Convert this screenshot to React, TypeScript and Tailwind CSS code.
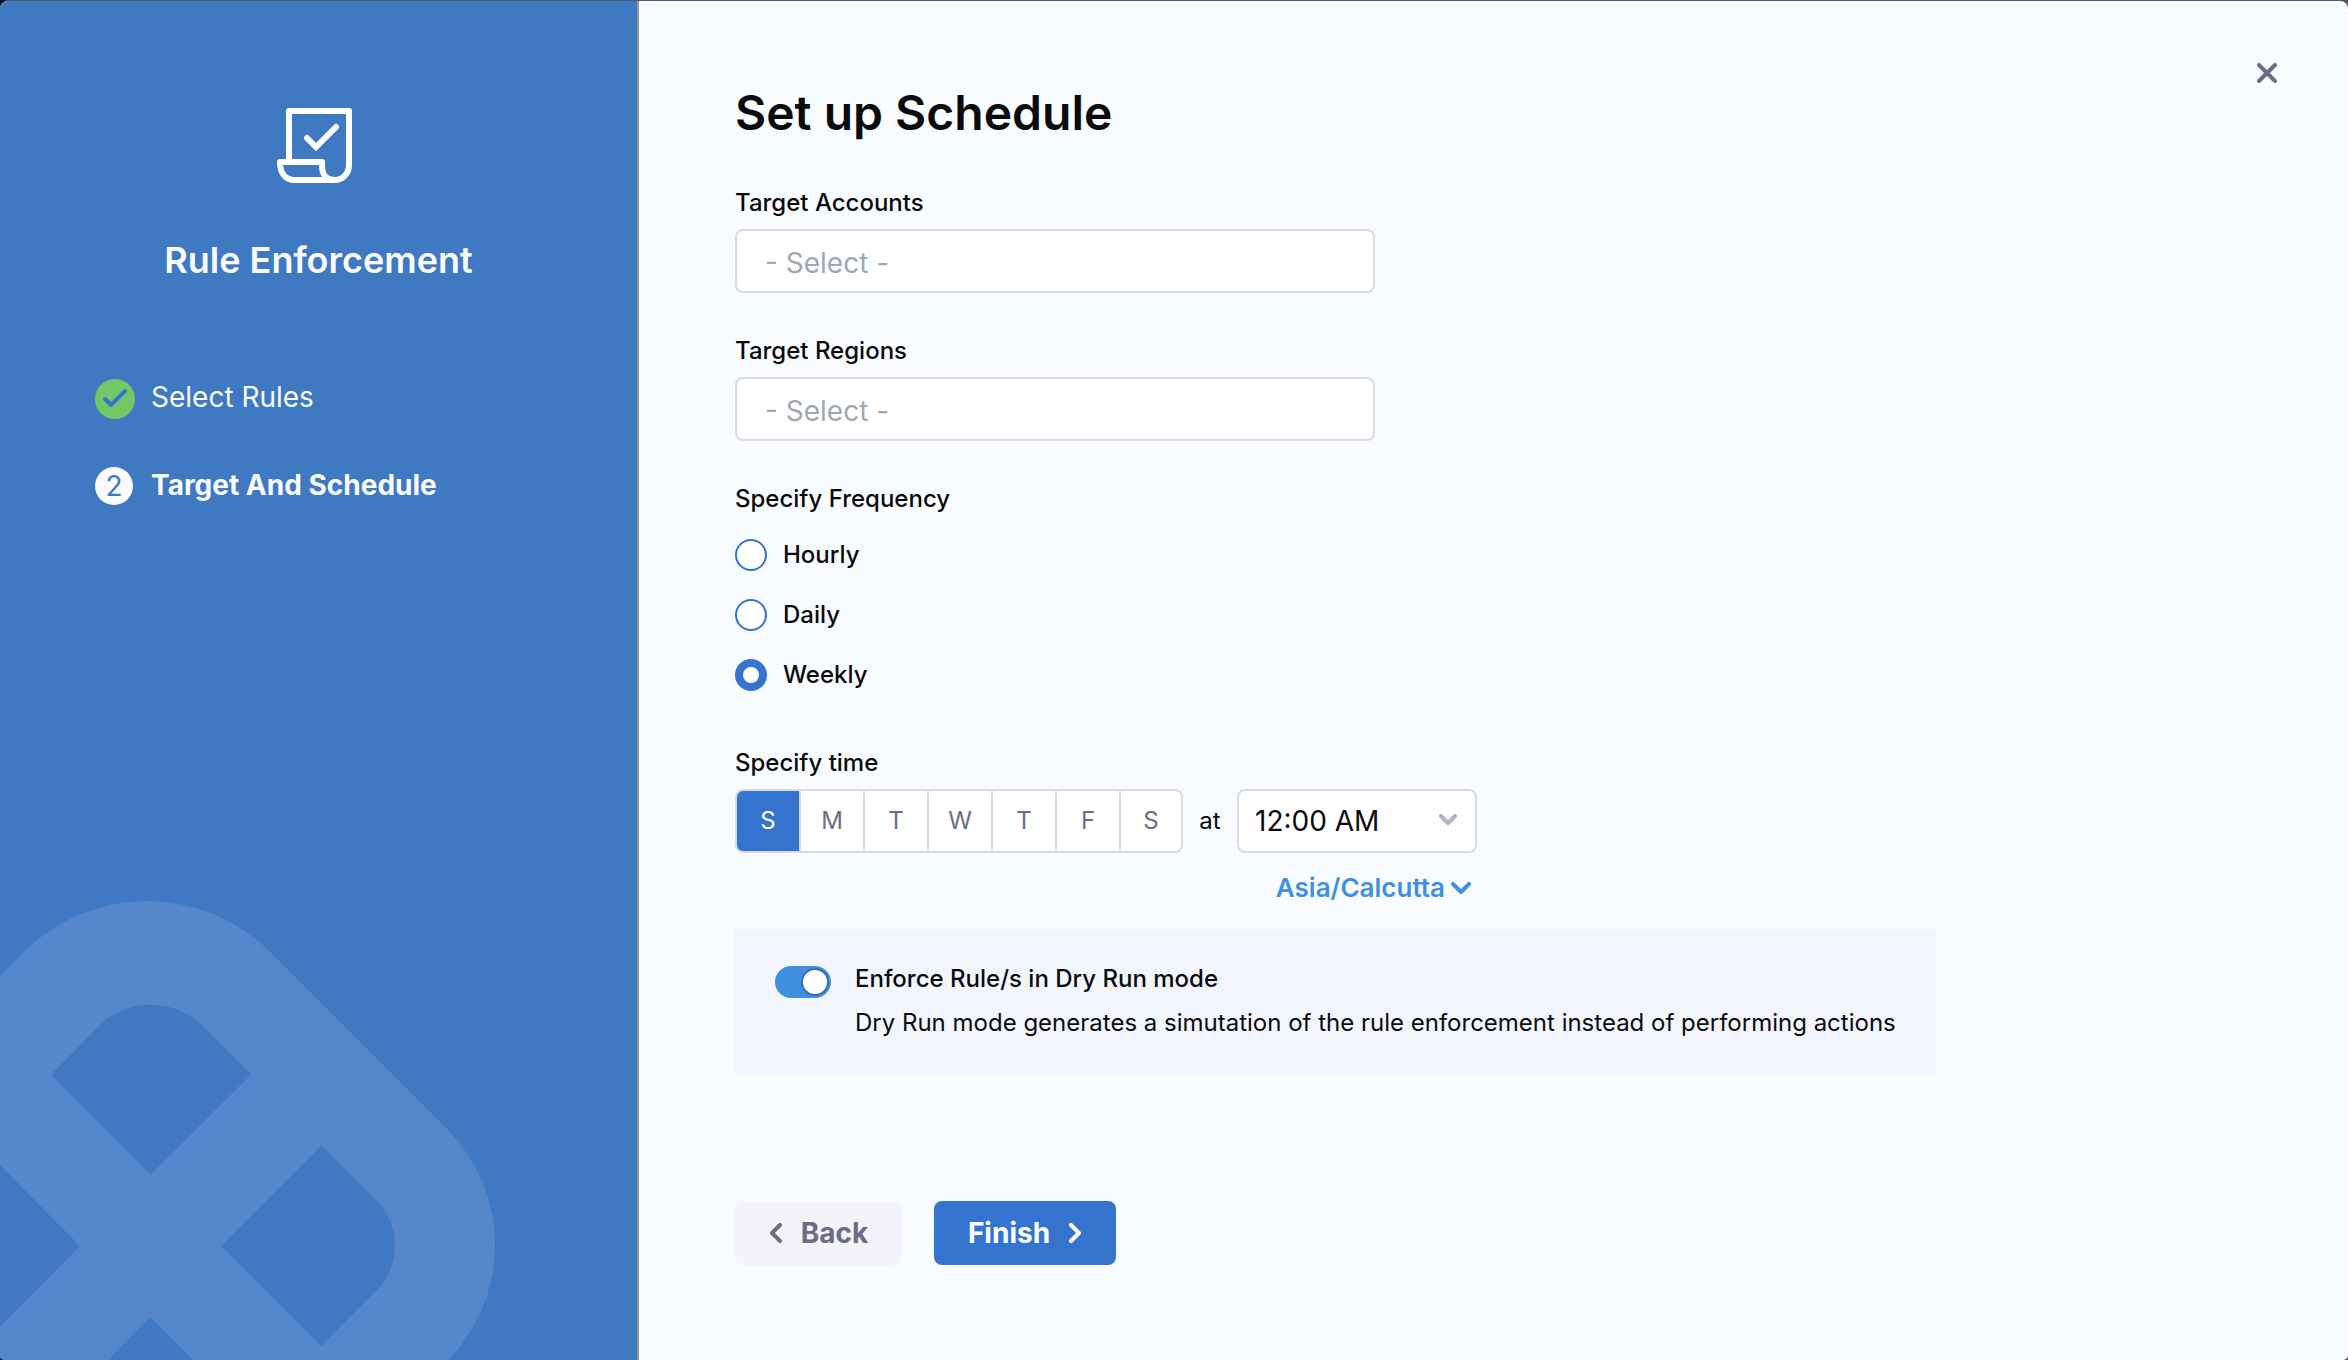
import { useState } from "react";

const DAYS = [
  { letter: "S", name: "Sunday" },
  { letter: "M", name: "Monday" },
  { letter: "T", name: "Tuesday" },
  { letter: "W", name: "Wednesday" },
  { letter: "T", name: "Thursday" },
  { letter: "F", name: "Friday" },
  { letter: "S", name: "Saturday" },
];

const FREQUENCIES = ["Hourly", "Daily", "Weekly"];

function RuleIcon() {
  return (
    <svg width="75" height="75" viewBox="0 0 75 75" fill="none" stroke="white" strokeWidth="6" strokeLinejoin="round" strokeLinecap="round" aria-hidden="true">
      <path d="M12 53V3H72V57C72 65 66 72 58 72H18C9 72 3 66 3 54H45V58C45 66 49 72 58 72" />
      <path d="M30 30L39 39L59 19" strokeLinejoin="miter" />
    </svg>
  );
}

function Watermark() {
  return (
    <svg width="500" height="460" viewBox="0 900 500 460" className="absolute bottom-0 left-0" aria-hidden="true">
      <path
        fill="#5488ca"
        fillRule="evenodd"
        d="M-10 986L25 951A174 174 0 0 1 271 953L447 1129A164 164 0 0 1 447 1361H-10ZM51 1074.500L150.500 1174.500L251 1074.500L200 1023.500A74 74 0 0 0 96 1029ZM321.500 1145.500L221.500 1246L321.500 1346L376 1291A64 64 0 0 0 376 1200ZM80 1246L-10 1155V1337ZM150.500 1317L107 1361H194Z"
      />
    </svg>
  );
}

function Chevron({ className, path, width, height }: { className?: string; path: string; width: number; height: number }) {
  return (
    <svg width={width} height={height} viewBox={`0 0 ${width} ${height}`} className={className} fill="none" stroke="currentColor" strokeWidth="4" strokeLinecap="round" strokeLinejoin="round" aria-hidden="true">
      <path d={path} />
    </svg>
  );
}

function TargetField({ id, label }: { id: string; label: string }) {
  return (
    <div className="flex w-[640px] flex-col gap-[10px]">
      <label htmlFor={id} className="text-2xl leading-8 font-medium">{label}</label>
      <input
        id={id}
        type="text"
        placeholder="- Select -"
        className="h-16 w-full rounded-lg border-2 border-[#d9dae5] bg-white px-7 pt-[3px] text-[28px] placeholder:text-[#9ea8b5]"
      />
    </div>
  );
}

export default function App() {
  const [frequency, setFrequency] = useState("Weekly");
  const [day, setDay] = useState(0);
  const [dryRun, setDryRun] = useState(true);

  return (
    <div className="flex min-h-screen flex-col bg-[linear-gradient(90deg,#14151f_4px,#59595c_8px)] pt-px font-['Inter',sans-serif] text-[#0b0b0d]">
      <div className="flex flex-1 overflow-hidden rounded-t-lg rounded-b-[5px] bg-[#f9fcff]">
        <aside className="relative flex w-[639px] shrink-0 flex-col border-r-2 border-[#96969b] bg-[#3f79c2] pt-[107px] text-[#fafbfc]">
          <Watermark />
          <div className="flex flex-col items-center gap-[53px]">
            <div className="pr-2">
              <RuleIcon />
            </div>
            <h2 className="text-4xl leading-[48px] font-semibold">Rule Enforcement</h2>
          </div>
          <ol className="mt-[95px] flex flex-col gap-12 px-[95px] text-[28px] leading-9">
            <li className="flex gap-4">
              <svg width="40" height="40" viewBox="0 0 40 40" fill="none" aria-hidden="true">
                <circle cx="20" cy="20" r="20" fill="#72c864" />
                <path d="M10 20L16 26L30 12" stroke="#3474d0" strokeWidth="4" strokeLinecap="round" strokeLinejoin="round" />
              </svg>
              <span>Select Rules</span>
            </li>
            <li className="flex gap-[18px] font-bold" aria-current="step">
              <span className="flex size-[38px] items-center justify-center rounded-full bg-[#fafbfc] font-normal text-[#3f79c2]">2</span>
              <span>Target And Schedule</span>
            </li>
          </ol>
        </aside>

        <main className="relative flex-1 px-24 pt-20 pb-[95px]">
          <button type="button" aria-label="Close" className="absolute top-[52px] right-[61px] flex size-10 items-center justify-center text-[#6b6d85]">
            <Chevron path="M2 2L18 18M18 2L2 18" width={20} height={20} />
          </button>

          <h1 className="text-5xl leading-[64px] font-semibold">Set up Schedule</h1>

          <form className="mt-[42px] flex flex-col items-start" onSubmit={(e) => e.preventDefault()}>
            <div className="flex flex-col gap-[42px]">
              <TargetField id="accounts" label="Target Accounts" />
              <TargetField id="regions" label="Target Regions" />
            </div>

            <fieldset className="mt-[42px] text-2xl leading-8 font-medium">
              <legend>Specify Frequency</legend>
              <div className="mt-6 flex flex-col gap-7">
                {FREQUENCIES.map((name) => (
                  <label key={name} className="flex gap-4">
                    <input
                      type="radio"
                      name="frequency"
                      checked={frequency === name}
                      onChange={() => setFrequency(name)}
                      className="size-8 appearance-none rounded-full border-2 border-[#3474cf] bg-white checked:border-8"
                    />
                    {name}
                  </label>
                ))}
              </div>
            </fieldset>

            <div className="mt-14 flex flex-col">
              <h2 className="text-2xl leading-8 font-medium">Specify time</h2>
              <div className="mt-[10px] flex items-center">
                <div role="group" aria-label="Day of the week" className="flex h-16 w-[448px] overflow-hidden rounded-lg border-2 border-[#d9dae5] bg-white">
                  {DAYS.map((d, i) => (
                    <button
                      key={d.name}
                      type="button"
                      aria-label={d.name}
                      aria-pressed={day === i}
                      onClick={() => setDay(i)}
                      className="border-[#d9dae5] text-2xl text-[#6b6d85] not-last:w-16 not-last:border-r-2 last:flex-1 aria-pressed:bg-[#3474cf] aria-pressed:text-white"
                    >
                      {d.letter}
                    </button>
                  ))}
                </div>
                <label htmlFor="time" className="w-[54px] text-center text-2xl">at</label>
                <div className="relative">
                  <select id="time" defaultValue="12:00 AM" className="h-16 w-60 appearance-none rounded-lg border-2 border-[#d9dae5] bg-white px-4 text-[28px]">
                    <option>12:00 AM</option>
                  </select>
                  <Chevron path="M2 2L9 9L16 2" width={18} height={12} className="pointer-events-none absolute top-[25px] right-5 text-[#b0b1c3]" />
                </div>
              </div>
              <button type="button" className="mt-[19px] mr-[6px] flex items-center gap-[6px] self-end text-[26px] leading-8 font-semibold text-[#3f90df]">
                Asia/Calcutta
                <Chevron path="M2 2L10 10L18 2" width={20} height={12} />
              </button>
            </div>

            <div className="mt-[25px] flex gap-6 bg-[#f3f5fd] pt-[34px] pr-10 pb-[34px] pl-10">
              <input
                id="dry-run"
                type="checkbox"
                role="switch"
                checked={dryRun}
                onChange={(e) => setDryRun(e.target.checked)}
                className="mt-[3px] flex h-8 w-14 shrink-0 appearance-none items-center rounded-full bg-[#b0b1c3] px-1 before:size-6 before:rounded-full before:bg-white before:shadow-[0_0_0_2px_rgba(16,22,60,0.25)] checked:justify-end checked:bg-[#4090dd]"
              />
              <div className="flex flex-col gap-3 text-2xl leading-8">
                <label htmlFor="dry-run" className="font-medium">Enforce Rule/s in Dry Run mode</label>
                <p>Dry Run mode generates a simutation of the rule enforcement instead of performing actions</p>
              </div>
            </div>

            <div className="mt-32 flex gap-8 text-[28px] font-bold">
              <button type="button" className="flex h-16 min-w-[167px] items-center justify-center gap-[18px] rounded-lg bg-[#f4f3f9] text-[#6b6d85]">
                <Chevron path="M11 2L3 10L11 18" width={14} height={20} />
                Back
              </button>
              <button type="submit" className="flex h-16 min-w-[182px] items-center justify-center gap-[18px] rounded-lg bg-[#3474cf] text-white">
                Finish
                <Chevron path="M3 2L11 10L3 18" width={14} height={20} />
              </button>
            </div>
          </form>
        </main>
      </div>
    </div>
  );
}
